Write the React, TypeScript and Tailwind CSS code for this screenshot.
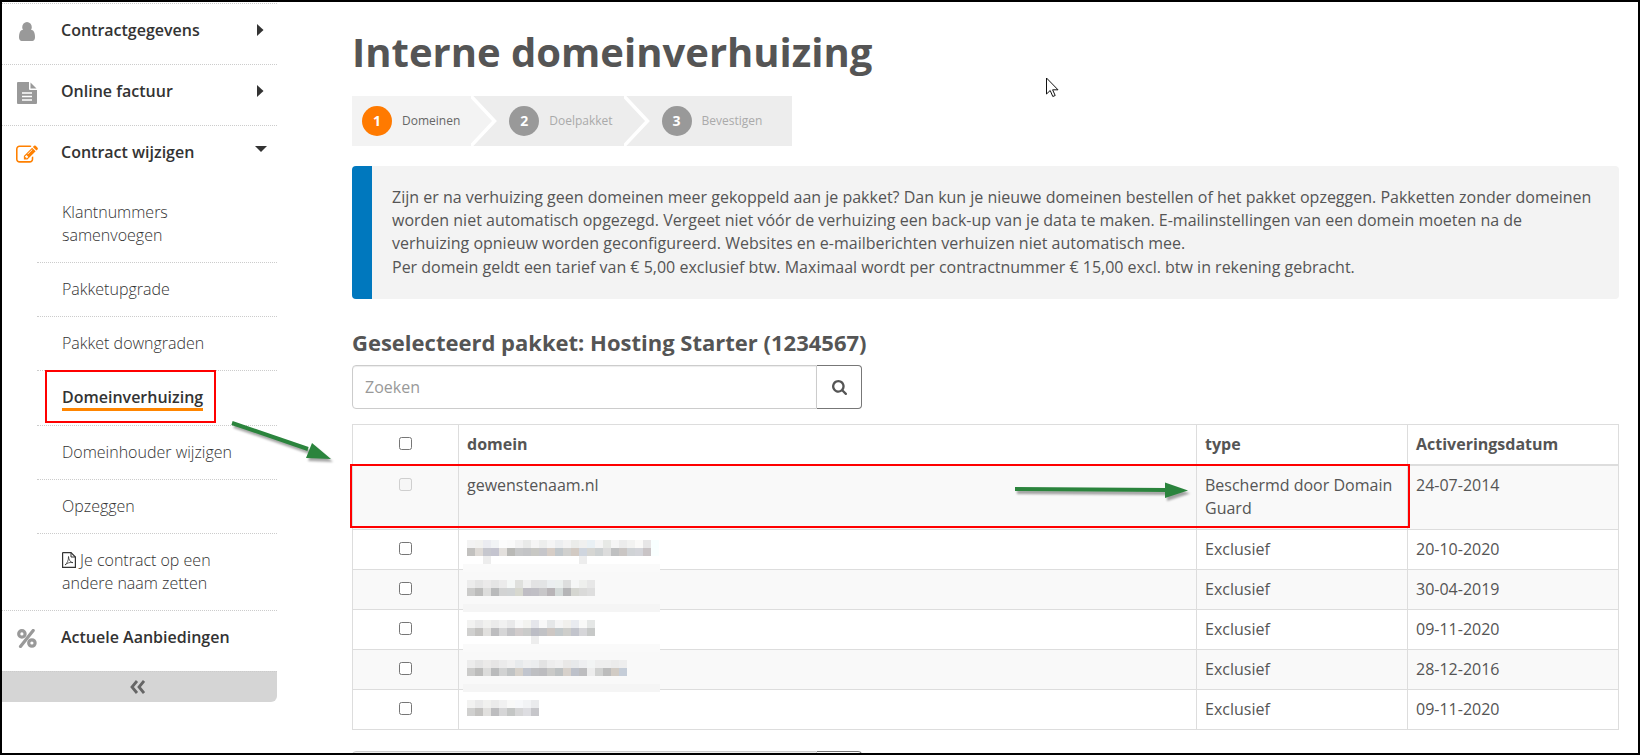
import type { ReactNode } from 'react'

type DomainRow = {
  type: string
  date: string
  name?: string
  top?: string
  bottom?: string
  drops?: number[]
  band?: string
}

// Pixelated names: one grey/tinted hex value per 8px block
const rows: DomainRow[] = [
  { name: 'gewenstenaam.nl', type: 'Beschermd door Domain Guard', date: '24-07-2014' },
  {
    type: 'Exclusief',
    date: '20-10-2020',
    top: 'f3f3f3 f2f2f0 ebecf1 f1f3f5 fcfcfc fafafa f2f2f2 e9eae9 f5f5f5 edeeed f5f5f5 eceef0 f3f3f3 ebecea f0f0ef e9f0f4 f5f5f5 e7e9e6 f5f5f5 ececec f2f2f1 faf9f8 e7e6e7 f8ffff',
    bottom:
      'c2c1bf dedad6 c6c7ce c4c4cf e3e0dd b9b9b6 c6c7c8 c3c4c6 c8c8c4 c6c6ca d6cdc6 c1c7cb d0d0ce d2cac3 cfd5de d6d6d3 cdd1d2 dcdcdc bfc0c1 cac6c4 d0d3d6 d3d4d9 c9c4c6 f9ffff',
    drops: [2, 14],
    band: '#fafafa',
  },
  {
    type: 'Exclusief',
    date: '30-04-2019',
    top: 'ececec e4e4e4 ebeaea e5e5e5 ebebeb f4f7f6 dfe0dd f0f0f0 e3e3e4 e3e4e5 ebeef0 ebefee dddede f5f6f6 eeefed e7e7e7',
    bottom: 'cbcbca bcbcbb dddddc b9babb d2d3d3 d1d4d5 d7d8cf bfbdc4 c0bfc5 c8c7c9 b8b4b7 d3d9d8 b5b5b7 d5d6d1 dadad9 dedede',
    band: '#f5f5f5',
  },
  {
    type: 'Exclusief',
    date: '09-11-2020',
    top: 'f2f2f1 e9e9e9 f1f1ef ebebeb f1f1f1 e9e9ea f8f8f8 f3f3f0 e5e6eb f8f8f8 e5e7e8 f5f5f5 f1f0ed e9ebf0 f9f9f8 e5e7e6',
    bottom: 'd0d0cf c3c2c0 e1e0de bdbdbf d6d6d7 c3c3c6 d1cccc cacbca bcbdc5 c1c2c5 cdc7c3 c3c9cb cececb c2c4cc d6d6d9 c7c9c8',
    drops: [8],
    band: '#fafafa',
  },
  {
    type: 'Exclusief',
    date: '28-12-2016',
    top: 'ececec e4e4e4 ebeae9 e6e5e5 ebebeb f0f0f0 e7eaec eeeff0 ebedef e3e3e3 ededed f0f0f0 e9e8e7 e7e9eb eeeff1 f2f4f4 eeeeee eeeeee ebebeb eeeeee',
    bottom:
      'cbcbca bcbcbb dcdcdb babbbc d1d2d2 c0c3c4 d6d1ca c1c5ce bebfc2 bcbcbf cacac8 bdc1c2 d7d1cb bdc1ca bdbdbf ededed d0d1d0 bcbcbc d1cbc4 c5cdd8',
    band: '#f5f5f5',
  },
  {
    type: 'Exclusief',
    date: '09-11-2020',
    top: 'f2f2f1 e9e9e9 f1f1ef ebebeb f1f1f1 f9f9f8 f7f8fa f2f3f5 eaebed',
    bottom: 'd0d0cf c3c2c0 e1e0de bdbdbf d6d6d7 c4c6c5 d6d6d7 dddde1 c6c6ca',
  },
]

function Mosaic({ top = '', bottom = '', drops = [], band }: DomainRow) {
  return (
    <svg className="absolute left-1 top-0 overflow-visible" width="198" height="40" aria-hidden="true" shapeRendering="crispEdges">
      {top.split(' ').map((c, i) => (
        <rect key={i} x={4 + i * 8} y="10" width="8" height="8" fill={`#${c}`} />
      ))}
      {bottom.split(' ').map((c, i) => (
        <rect key={i} x={4 + i * 8} y="18" width="8" height="8" fill={`#${c}`} />
      ))}
      {drops.map((i) => (
        <rect key={i} x={4 + i * 8} y="26" width="8" height="8" fill="#ededed" />
      ))}
      {band && <rect width="197" y="34" height="8" fill={band} />}
    </svg>
  )
}

function UserIcon() {
  return (
    <svg width="16" height="19" viewBox="0 128 1280 1408" preserveAspectRatio="none" fill="#999" aria-hidden="true">
      <path d="M1280 1271q0 109-62.5 187t-150.5 78h-854q-88 0-150.5-78t-62.5-187q0-85 8.5-160.5t31.5-152 58.5-131 94-89 134.5-34.5q131 128 313 128t313-128q76 0 134.5 34.5t94 89 58.5 131 31.5 152 8.5 160.5zM1024 512q0 159-112.5 271.5t-271.5 112.5-271.5-112.5-112.5-271.5 112.5-271.5 271.5-112.5 271.5 112.5 112.5 271.5z" />
    </svg>
  )
}

function FileIcon() {
  return (
    <svg width="20" height="22" viewBox="0 0 20 22" aria-hidden="true">
      <path d="M1 0h11v7q0 1 1 1h7v13q0 1-1 1H1q-1 0-1-1V1q0-1 1-1z" fill="#999" />
      <path d="M13.5 .5 19.5 6.500H13.500z" fill="#999" />
      <path d="M5 11h10M5 14.500h10M5 18h10" stroke="#fff" strokeWidth="1.300" />
    </svg>
  )
}

function EditIcon() {
  return (
    <svg width="22" height="18" viewBox="0 110 1792 1436" fill="#ff8000" aria-hidden="true">
      <path d="M888 1184l116-116-152-152-116 116v56h96v96h56zm440-720q-16-16-33 1l-350 350q-17 17-1 33t33-1l350-350q17-17 1-33zm80 594v190q0 119-84.5 203.5t-203.5 84.5h-832q-119 0-203.5-84.5t-84.5-203.5v-832q0-119 84.5-203.5t203.5-84.5h832q63 0 117 25 15 7 18 23 3 17-9 29l-49 49q-14 14-32 8-23-6-45-6h-832q-66 0-113 47t-47 113v832q0 66 47 113t113 47h832q66 0 113-47t47-113v-126q0-13 9-22l64-64q15-15 35-7t20 29zm-96-738l288 288-672 672h-288v-288zm444 132l-92 92-288-288 92-92q28-28 68-28t68 28l152 152q28 28 28 68t-28 68z" />
    </svg>
  )
}

function PercentIcon() {
  return (
    <svg width="20" height="19" viewBox="0 0 20 19" fill="none" stroke="#999" aria-hidden="true">
      <circle cx="4.900" cy="4.900" r="3.200" strokeWidth="3.200" />
      <circle cx="14.900" cy="14" r="3.200" strokeWidth="3.200" />
      <path d="M16.200 1.500 3.500 17.500" strokeWidth="3.200" strokeLinecap="round" />
    </svg>
  )
}

function PdfIcon() {
  return (
    <svg className="mr-1 inline align-[-2px]" width="14" height="16" viewBox="0 0 14 16" fill="none" stroke="#333" aria-hidden="true">
      <path d="M1 .6h8l4.400 4.400v10.400H.6V1z" strokeWidth="1.200" />
      <path d="M9 .6V5h4.400" />
      <path d="M6.500 4.500c.3 3.500 1.500 5.500 4.500 6.200-3-.6-5.500 0-8 2.300 2-1.600 3.700-4.500 3.500-8.500z" strokeWidth=".8" />
    </svg>
  )
}

function SearchIcon() {
  return (
    <svg width="15" height="15" viewBox="64 128 1664 1664" fill="#555" aria-hidden="true">
      <path d="M1216 832q0-185-131.5-316.5t-316.5-131.5-316.5 131.5-131.5 316.5 131.5 316.5 316.5 131.5 316.5-131.5 131.5-316.5zm512 832q0 52-38 90t-90 38q-54 0-90-38l-343-342q-179 124-399 124-143 0-273.5-55.5t-225-150-150-225-55.5-273.5 55.5-273.5 150-225 225-150 273.5-55.5 273.5 55.5 225 150 150 225 55.5 273.5q0 220-124 399l343 343q37 37 37 90z" />
    </svg>
  )
}

function MenuItem({ icon, label, open }: { icon: ReactNode; label: string; open?: boolean }) {
  return (
    <a href="#" className="flex h-[60px] items-start pr-[10px] pt-[15px] font-semibold text-[#333]">
      <span className="flex h-[25px] w-[50px] shrink-0 items-center justify-center">{icon}</span>
      <span className="ml-[9px] flex-1">{label}</span>
      {open === false && (
        <svg className="mr-[3px] mt-[5px]" width="7" height="12" aria-hidden="true">
          <path d="M0 0l6.500 6L0 12z" fill="#333" />
        </svg>
      )}
      {open === true && (
        <svg className="mt-[5px]" width="12" height="6" aria-hidden="true">
          <path d="M0 0h12l-6 6z" fill="#333" />
        </svg>
      )}
    </a>
  )
}

function Sidebar() {
  const sub = 'block py-[15px] pl-[25px] pr-8 font-light text-[#333]'
  const line = 'border-t border-dotted border-[#ccc]'
  return (
    <nav className="w-[275px] shrink-0 pt-px">
      <ul>
        <li className={line}>
          <MenuItem icon={<UserIcon />} label="Contractgegevens" open={false} />
        </li>
        <li className={line}>
          <MenuItem icon={<FileIcon />} label="Online factuur" open={false} />
        </li>
        <li className={line}>
          <MenuItem icon={<EditIcon />} label="Contract wijzigen" open />
          <ul className="ml-[35px]">
            <li>
              <a href="#" className={sub}>Klantnummers samenvoegen</a>
            </li>
            <li className={line}>
              <a href="#" className={sub}>Pakketupgrade</a>
            </li>
            <li className={line}>
              <a href="#" className={sub}>Pakket downgraden</a>
            </li>
            <li className="relative border-t border-dotted border-[#ccc]">
              <a href="#" className="block pb-[14px] pl-[25px] pt-4 font-semibold leading-[21px] text-[#333]">
                <span className="inline-block border-b-[3px] border-[#ff8500]">Domeinverhuizing</span>
              </a>
              <div className="pointer-events-none absolute -top-px left-2 h-[53px] w-[171px] border-2 border-[#f00]" />
              <svg className="pointer-events-none absolute left-[191px] top-[47px] z-10 overflow-visible drop-shadow-[2px_3px_1px_rgba(0,0,0,0.35)]" width="104" height="44" aria-hidden="true">
                <path d="M4 5l76 26" stroke="#2b843d" strokeWidth="4" />
                <path d="M84 25l19 16-25-1z" fill="#2b843d" />
              </svg>
            </li>
            <li className={line}>
              <a href="#" className={sub}>Domeinhouder wijzigen</a>
            </li>
            <li className={line}>
              <a href="#" className={sub}>Opzeggen</a>
            </li>
            <li className={line}>
              <a href="#" className={sub}>
                <PdfIcon />
                Je contract op een andere naam zetten
              </a>
            </li>
          </ul>
        </li>
        <li className={line}>
          <MenuItem icon={<PercentIcon />} label="Actuele Aanbiedingen" />
        </li>
      </ul>
      <button aria-label="Menu inklappen" className="flex h-[31px] w-full items-center justify-center rounded-br-md border-t border-dotted border-[#ccc] bg-[#d5d5d5]">
        <svg className="mr-1" width="15" height="14" viewBox="0 0 15 14" fill="none" stroke="#666" strokeWidth="2.800" aria-hidden="true">
          <path d="M7 1 2 7l5 6M14 1 9 7l5 6" />
        </svg>
      </button>
    </nav>
  )
}

function StepArrow({ from }: { from: string }) {
  return (
    <svg width="28" height="50" viewBox="0 0 28 50" aria-hidden="true">
      <path d="M0 0h1l24 25L1 50H0z" fill={from} />
      <path d="M-1-1l24.500 26L-1 51" fill="none" stroke="#fff" strokeWidth="3.500" />
    </svg>
  )
}

function Steps() {
  const dot = 'flex size-[30px] items-center justify-center rounded-full text-sm font-bold text-white'
  return (
    <ol className="mt-[22px] flex h-[50px] w-fit items-center bg-[#ededed] text-xs text-[#aaa]">
      <li className="flex h-full items-center gap-[10px] bg-[#f3f3f3] pl-[10px] pr-[11px] text-[#666]">
        <span className={`${dot} bg-[#ff7a00]`}>1</span>
        Domeinen
      </li>
      <li className="flex items-center gap-[10px] pr-[11px]">
        <StepArrow from="#f3f3f3" />
        <span className={`${dot} bg-[#999]`}>2</span>
        Doelpakket
      </li>
      <li className="flex items-center gap-[10px] pr-[30px]">
        <StepArrow from="#ededed" />
        <span className={`${dot} bg-[#999]`}>3</span>
        Bevestigen
      </li>
    </ol>
  )
}

function SearchBox() {
  return (
    <form className="flex h-11 w-full max-w-[510px]">
      <input
        type="text"
        aria-label="Zoeken"
        placeholder="Zoeken"
        className="min-w-0 flex-1 rounded-l border border-[#ccc] px-3 shadow-[inset_0_1px_1px_rgba(0,0,0,0.075)] placeholder:text-[#999]"
      />
      <button type="button" aria-label="Zoeken" className="flex w-[45px] items-center justify-center rounded-r border border-l-0 border-[#777] bg-white">
        <SearchIcon />
      </button>
    </form>
  )
}

function DomainTable() {
  const head = 'border border-b-2 border-[#ddd] p-2 text-left align-top'
  const cell = 'border border-[#ddd] p-2 text-left align-top'
  return (
    <div className="relative mt-[15px]">
      <table className="w-full table-fixed border-collapse">
        <colgroup>
          <col className="w-[106px]" />
          <col />
          <col className="w-[211px]" />
          <col className="w-[211px]" />
        </colgroup>
        <thead>
          <tr>
            <th className={head}>
              <input type="checkbox" aria-label="Alles selecteren" className="mx-auto mt-1 block size-[13px]" />
            </th>
            <th className={head}>domein</th>
            <th className={head}>type</th>
            <th className={head}>Activeringsdatum</th>
          </tr>
        </thead>
        <tbody>
          {rows.map((row, i) => (
            <tr key={i} className="odd:bg-[#f9f9f9] first:h-16">
              <td className={cell}>
                <input type="checkbox" aria-label={row.name ?? `Domein ${i + 1}`} disabled={!!row.name} className="mx-auto mt-1 block size-[13px]" />
              </td>
              <td className="relative border border-[#ddd] p-2 align-top">
                {row.name ?? <Mosaic {...row} />}
                {row.name && (
                  <svg className="absolute right-2 top-[15px] overflow-visible drop-shadow-[2px_3px_1px_rgba(0,0,0,0.35)]" width="173" height="18" aria-hidden="true">
                    <path d="M0 8l152 1" stroke="#2b843d" strokeWidth="4" />
                    <path d="M150 1.500l23 8-23 7.500z" fill="#2b843d" />
                  </svg>
                )}
              </td>
              <td className={cell}>{row.type}</td>
              <td className={cell}>{row.date}</td>
            </tr>
          ))}
        </tbody>
      </table>
      <div className="pointer-events-none absolute -left-[2px] right-[209px] top-10 h-16 border-2 border-[#f00]" />
    </div>
  )
}

export default function App() {
  return (
    <div className="flex h-screen overflow-hidden border-2 border-black bg-white font-['Open_Sans',sans-serif] text-base leading-[23px] text-[#555]">
      <Sidebar />
      <main className="relative ml-[75px] mr-[19px] min-w-0 flex-1 pt-7">
        <h1 className="text-[40px] font-bold leading-[44px]">Interne domeinverhuizing</h1>
        <svg className="pointer-events-none absolute left-[694px] top-[75px]" width="13" height="21" viewBox="0 0 13 21" aria-hidden="true">
          <path d="M.5 1v16l3.700-3.500 2.600 6 2.400-1-2.600-5.700H12z" fill="#fff" stroke="#111" />
        </svg>
        <Steps />
        <div className="mt-5 rounded border-l-[20px] border-[#0078be] bg-[#f3f3f3] px-5 pb-5 pt-5">
          <p className="mb-px">
            Zijn er na verhuizing geen domeinen meer gekoppeld aan je pakket? Dan kun je nieuwe domeinen bestellen of het pakket opzeggen. Pakketten zonder domeinen worden niet automatisch
            opgezegd. Vergeet niet vóór de verhuizing een back-up van je data te maken. E-mailinstellingen van een domein moeten na de verhuizing opnieuw worden geconfigureerd. Websites en
            e-mailberichten verhuizen niet automatisch mee.
          </p>
          <p>Per domein geldt een tarief van € 5,00 exclusief btw. Maximaal wordt per contractnummer € 15,00 excl. btw in rekening gebracht.</p>
        </div>
        <h2 className="mb-[11px] mt-[31px] text-[22px] font-bold leading-6">Geselecteerd pakket: Hosting Starter (1234567)</h2>
        <SearchBox />
        <DomainTable />
        <div className="mt-[21px]">
          <SearchBox />
        </div>
      </main>
    </div>
  )
}
